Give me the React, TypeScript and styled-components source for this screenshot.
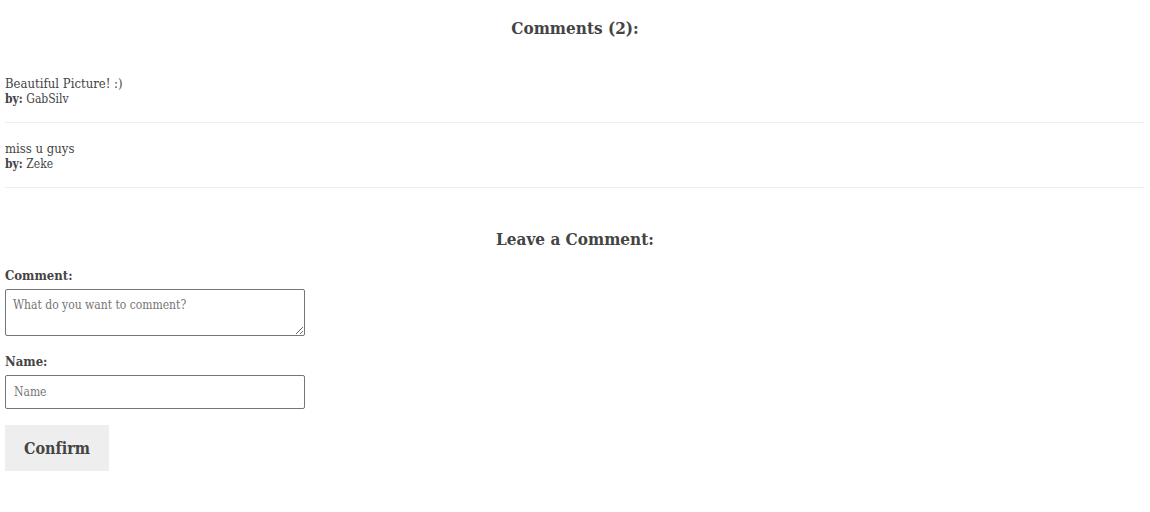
import React from 'react';
import styled, { createGlobalStyle } from 'styled-components';

const GlobalStyle = createGlobalStyle`
  *, *::before, *::after {
    box-sizing: border-box;
  }
  body {
    margin: 0;
    background: #fff;
    color: #444;
    font-family: 'DejaVu Serif Condensed', 'DejaVu Serif', serif;
    font-size: 13px;
    line-height: 16px;
    font-variant-ligatures: none;
  }
`;

const Page = styled.main`
  padding: 16px 5px;
`;

const Heading = styled.h2`
  margin: 0;
  font-size: 17px;
  line-height: 24px;
  text-align: center;
`;

const CommentList = styled.ul`
  margin: 18px 0 39px;
  padding: 0;
  list-style: none;
`;

const CommentItem = styled.li`
  padding: 18px 0 15px;
  border-bottom: 1px solid #eee;
`;

const CommentText = styled.p`
  margin: 0;
`;

const Author = styled.p`
  margin: 0;
  font-size: 12px;
  line-height: 15px;
`;

const Form = styled.form`
  display: flex;
  flex-direction: column;
  align-items: flex-start;
  padding-top: 15px;
`;

const Field = styled.div`
  display: flex;
  flex-direction: column;
  gap: 3px;
  width: 300px;
  max-width: 100%;
  margin-bottom: 16px;
`;

const Label = styled.label`
  font-weight: bold;
  line-height: 20px;
`;

const TextArea = styled.textarea`
  display: block;
  width: 100%;
  height: 47px;
  padding: 7px;
  border: 1px solid #767676;
  border-radius: 2px;
  background: #fff;
  color: inherit;
  font-family: inherit;
  font-size: 12px;
  line-height: 17px;
  &::placeholder {
    color: #757575;
  }
`;

const TextInput = styled.input`
  width: 100%;
  height: 34px;
  padding: 8px;
  border: 1px solid #767676;
  border-radius: 2px;
  background: #fff;
  color: inherit;
  font-family: inherit;
  font-size: 12px;
  &::placeholder {
    color: #757575;
  }
`;

const Button = styled.button`
  padding: 13px 19px 11px;
  border: 0;
  background: #eee;
  color: inherit;
  font-family: inherit;
  font-size: 16px;
  font-weight: bold;
  font-variant-ligatures: none;
  line-height: 22px;
  cursor: pointer;
`;

const comments = [
  { id: 1, text: 'Beautiful Picture! :)', author: 'GabSilv' },
  { id: 2, text: 'miss u guys', author: 'Zeke' },
];

export default function App() {
  return (
    <Page>
      <GlobalStyle />
      <Heading>Comments ({comments.length}):</Heading>
      <CommentList>
        {comments.map((comment) => (
          <CommentItem key={comment.id}>
            <CommentText>{comment.text}</CommentText>
            <Author>
              <b>by:</b> {comment.author}
            </Author>
          </CommentItem>
        ))}
      </CommentList>
      <Heading>Leave a Comment:</Heading>
      <Form onSubmit={(event: React.FormEvent) => event.preventDefault()}>
        <Field>
          <Label htmlFor="comment">Comment:</Label>
          <TextArea id="comment" name="comment" placeholder="What do you want to comment?" />
        </Field>
        <Field>
          <Label htmlFor="name">Name:</Label>
          <TextInput id="name" name="name" type="text" placeholder="Name" />
        </Field>
        <Button type="submit">Confirm</Button>
      </Form>
    </Page>
  );
}
